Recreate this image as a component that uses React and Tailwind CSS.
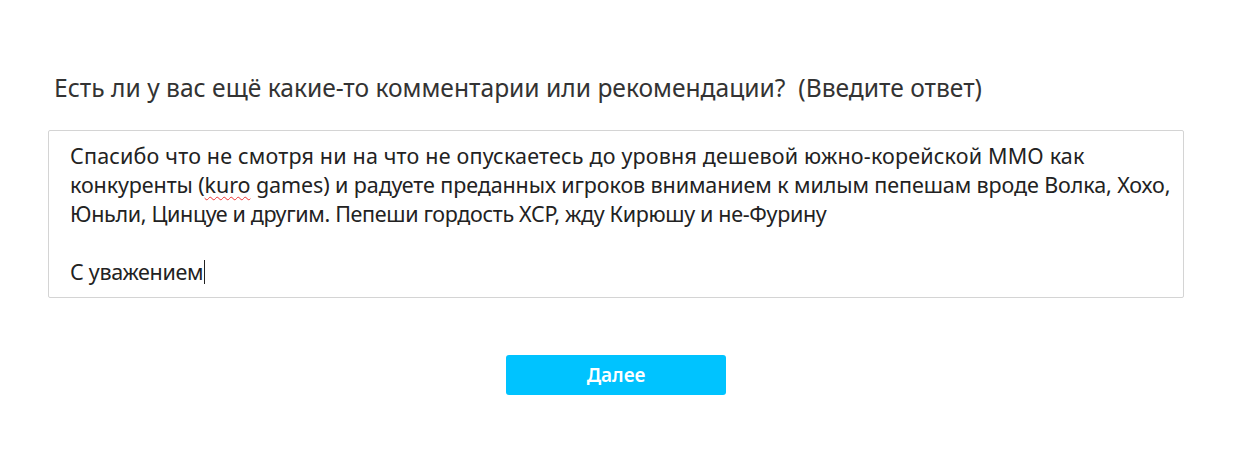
import React from 'react';

const App = () => {
  return (
    <div className="min-h-[465px] w-[1242px] bg-white font-['Noto_Sans',sans-serif] text-[#333]">
      <div className="ml-[48px] w-[1136px] pt-[70px]">
        <h2 className="pl-[6px] text-[24.6px] leading-[36px] text-[#333]">
          Есть ли у вас ещё какие-то комментарии или рекомендации?&nbsp; (Введите ответ)
        </h2>
        <div className="mt-[24px] h-[168px] rounded-[2px] border border-[#d4d4d4] px-[21px] py-[10px] text-[21.5px] leading-[29px] text-[#222]">
          <div className="whitespace-nowrap tracking-[0.18px]">
            Спасибо что не смотря ни на что не опускаетесь до уровня дешевой южно-корейской ММО как
          </div>
          <div className="whitespace-nowrap tracking-[-0.1px]">
            конкуренты (
            <span className="underline decoration-wavy decoration-[#e33] decoration-1 underline-offset-[3px]">kuro</span>
            {' '}games) и радуете преданных игроков вниманием к милым пепешам вроде Волка, Хохо,
          </div>
          <div className="whitespace-nowrap tracking-[-0.33px]">
            Юньли, Цинцуе и другим. Пепеши гордость ХСР, жду Кирюшу и не-Фурину
          </div>
          <div className="h-[29px]" />
          <div className="flex items-center whitespace-nowrap tracking-[-0.3px]">
            С уважением
            <span className="ml-[1px] inline-block h-[24px] w-[1px] bg-[#222]" />
          </div>
        </div>
        <div className="mt-[57px] flex justify-center">
          <button className="h-[40px] w-[220px] rounded-[3px] bg-[#00c3ff] text-[19px] font-semibold text-white">
            Далее
          </button>
        </div>
      </div>
    </div>
  );
};

export default App;
